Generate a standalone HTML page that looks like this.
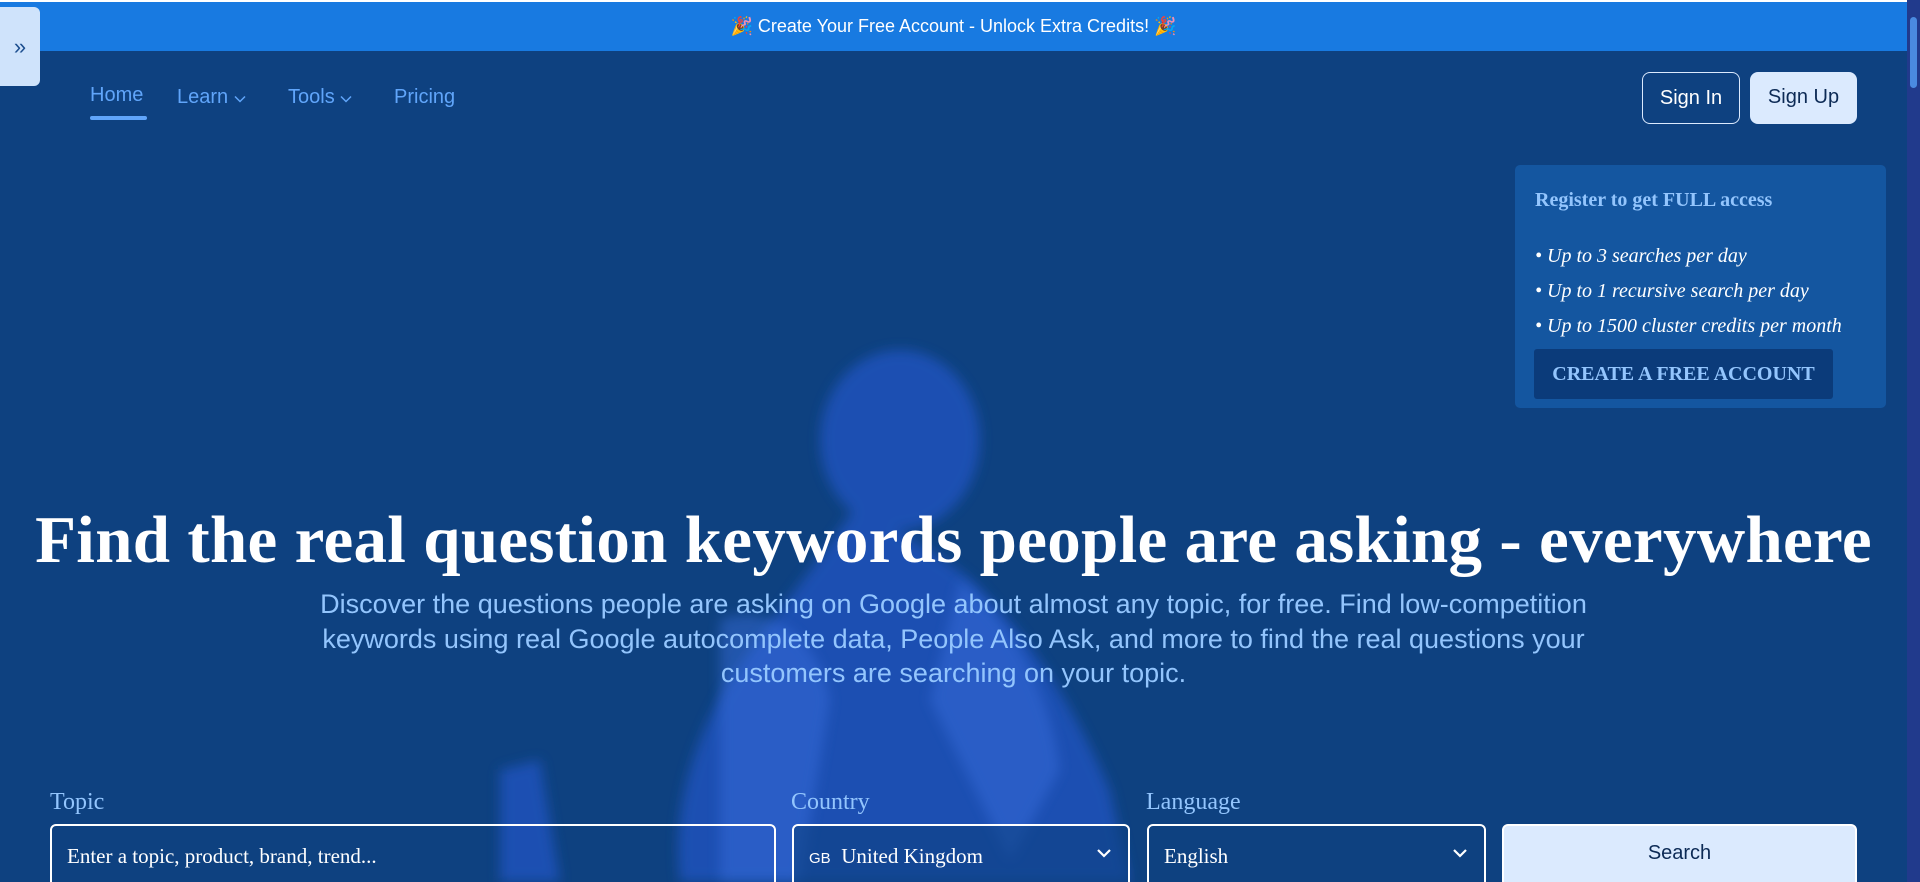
<!DOCTYPE html>
<html><head><meta charset="utf-8"><style>
*{box-sizing:border-box;margin:0;padding:0}
html,body{width:1920px;height:882px;overflow:hidden}
body{background:#0e4180;font-family:"Liberation Sans",sans-serif;position:relative}
.serif{font-family:"Liberation Serif",serif}
#banner{position:absolute;left:0;top:2px;width:1907px;height:49px;background:#187ae1;color:#fff;font-size:18px;text-align:center;line-height:49px}
#topline{position:absolute;left:0;top:0;width:1920px;height:2px;background:#fff}
#tab{position:absolute;left:0;top:7px;width:40px;height:79px;background:#cfe3fb;border-radius:0 6px 6px 0;color:#1d4f8f;font-size:22px;line-height:79px;text-align:center}
.nav{position:absolute;top:84px;font-size:20px;color:#60a5fa}
#ul{position:absolute;left:90px;top:116px;width:57px;height:4px;border-radius:2px;background:#60a5fa}
.btn{position:absolute;top:72px;height:52px;border-radius:8px;font-size:20px;line-height:50px;text-align:center}
#panel{position:absolute;left:1515px;top:165px;width:371px;height:243px;background:#1456a0;border-radius:5px}
#sb{position:absolute;left:1907px;top:0;width:13px;height:882px;background:#213a8c}
#thumb{position:absolute;left:1910px;top:17px;width:7px;height:71px;background:#4a8ae0;border-radius:4px}
h1{position:absolute;left:0;width:1907px;top:502px;text-align:center;color:#fff;font-family:"Liberation Serif",serif;font-size:67px;font-weight:bold;letter-spacing:0.3px}
#sub{position:absolute;left:0;width:1907px;top:587px;text-align:center;color:#93c5fd;font-size:27px;line-height:34.5px}
.lbl{position:absolute;top:789px;color:#93c5fd;font-family:"Liberation Serif",serif;font-size:24px}
.inp{position:absolute;top:824px;height:70px;border:2px solid #fff;border-radius:6px;color:#fff;font-family:"Liberation Serif",serif;font-size:21px;padding:18px 15px}
.chev{position:absolute;right:16px;top:22px}
</style></head><body>
<svg style="position:absolute;left:0;top:0" width="1920" height="882">
<defs><filter id="b"><feGaussianBlur stdDeviation="6"/></filter></defs>
<g fill="#2457c8" opacity="0.7" filter="url(#b)">
<ellipse cx="900" cy="440" rx="80" ry="90"/>
<path d="M860 500 C900 540 960 560 990 600 C1040 650 1080 720 1110 790 L1130 882 L680 882 C670 800 700 730 730 680 C770 620 820 560 860 500 Z"/>
<path d="M500 770 L540 760 L560 882 L500 882 Z"/>
</g>
<g fill="#3a6fe0" opacity="0.45" filter="url(#b)">
<path d="M960 580 C1010 620 1050 690 1060 770 L1010 860 L930 700 Z"/>
<path d="M720 620 C770 600 820 640 830 700 L800 882 L720 882 Z"/>
</g>
</svg>
<div id="topline"></div>
<div id="banner">🎉 Create Your Free Account - Unlock Extra Credits! 🎉</div>
<div id="tab">»</div>
<div class="nav" style="left:90px;top:84px">Home</div>
<div id="ul"></div>
<div class="nav" style="left:177px;top:86px">Learn <svg width="12" height="8" viewBox="0 0 12 8"><path d="M1 1.5 6 6.5 11 1.5" fill="none" stroke="#60a5fa" stroke-width="1.5"/></svg></div>
<div class="nav" style="left:288px;top:86px">Tools <svg width="12" height="8" viewBox="0 0 12 8"><path d="M1 1.5 6 6.5 11 1.5" fill="none" stroke="#60a5fa" stroke-width="1.5"/></svg></div>
<div class="nav" style="left:394px;top:86px">Pricing</div>
<div class="btn" style="left:1642px;width:98px;border:1.5px solid #dbeafe;color:#fff">Sign In</div>
<div class="btn" style="left:1750px;width:107px;background:#dbeafe;color:#0c2a55">Sign Up</div>
<div id="panel">
<div class="serif" style="position:absolute;left:20px;top:24px;color:#93c5fd;font-size:20px;font-weight:bold">Register to get FULL access</div>
<div class="serif" style="position:absolute;left:20px;top:74px;color:#fff;font-size:20px;font-style:italic;line-height:35px">• Up to 3 searches per day<br>• Up to 1 recursive search per day<br>• Up to 1500 cluster credits per month</div>
<div class="serif" style="position:absolute;left:19px;top:184px;width:299px;height:50px;background:#0b3b7a;border-radius:3px;color:#93c5fd;font-weight:bold;font-size:20px;line-height:50px;text-align:center">CREATE A FREE ACCOUNT</div>
</div>
<h1>Find the real question keywords people are asking - everywhere</h1>
<div id="sub">Discover the questions people are asking on Google about almost any topic, for free. Find low-competition<br>keywords using real Google autocomplete data, People Also Ask, and more to find the real questions your<br>customers are searching on your topic.</div>
<div class="lbl" style="left:50px">Topic</div>
<div class="lbl" style="left:791px">Country</div>
<div class="lbl" style="left:1146px">Language</div>
<div class="inp" style="left:50px;width:726px">Enter a topic, product, brand, trend...</div>
<div class="inp" style="left:792px;width:338px;background:rgba(14,65,128,0.6)"><span style="font-family:'Liberation Sans';font-size:15px">GB</span>&nbsp; United Kingdom<svg class="chev" width="16" height="10" viewBox="0 0 16 10"><path d="M2 2 8 8 14 2" fill="none" stroke="#fff" stroke-width="2.2"/></svg></div>
<div class="inp" style="left:1147px;width:339px;background:#0e4180">English<svg class="chev" width="16" height="10" viewBox="0 0 16 10"><path d="M2 2 8 8 14 2" fill="none" stroke="#fff" stroke-width="2.2"/></svg></div>
<div class="inp" style="left:1502px;width:355px;background:#dbeafe;color:#0c2a55;text-align:center;font-family:'Liberation Sans';font-size:20px;padding-top:16px">Search</div>
<div id="sb"></div><div id="thumb"></div>
</body></html>
